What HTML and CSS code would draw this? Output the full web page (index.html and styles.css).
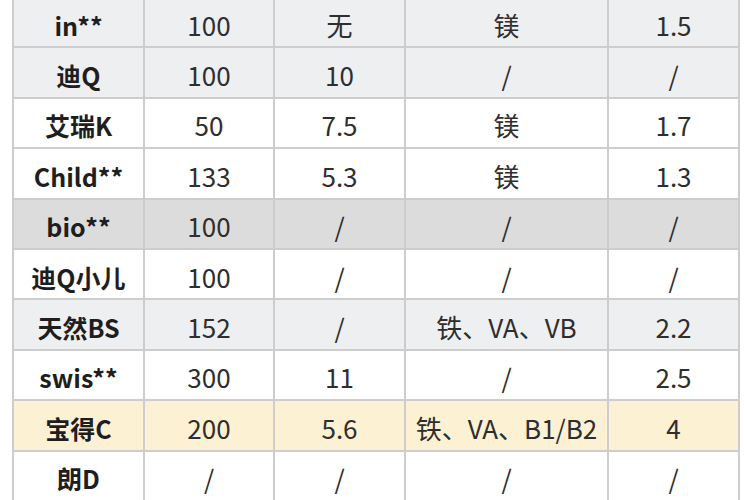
FILE: index.html
```html
<!DOCTYPE html>
<html lang="zh-CN">
<head>
<meta charset="utf-8">
<link rel="stylesheet" href="styles.css">
</head>
<body>
<div class="sheet">
<table class="grid">
  <colgroup>
    <col class="c1"><col class="c2"><col class="c3"><col class="c4"><col class="c5">
  </colgroup>
  <tbody>
    <tr class="shade"><th>in**</th><td>100</td><td>无</td><td>镁</td><td>1.5</td></tr>
    <tr class="shade"><th>迪Q</th><td>100</td><td>10</td><td>/</td><td>/</td></tr>
    <tr><th>艾瑞K</th><td>50</td><td>7.5</td><td>镁</td><td>1.7</td></tr>
    <tr><th>Child**</th><td>133</td><td>5.3</td><td>镁</td><td>1.3</td></tr>
    <tr class="dark"><th>bio**</th><td>100</td><td>/</td><td>/</td><td>/</td></tr>
    <tr><th>迪Q小儿</th><td>100</td><td>/</td><td>/</td><td>/</td></tr>
    <tr class="shade"><th>天然BS</th><td>152</td><td>/</td><td>铁、VA、VB</td><td>2.2</td></tr>
    <tr><th>swis**</th><td>300</td><td>11</td><td>/</td><td>2.5</td></tr>
    <tr class="warm"><th>宝得C</th><td>200</td><td>5.6</td><td>铁、VA、B1/B2</td><td>4</td></tr>
    <tr><th>朗D</th><td>/</td><td>/</td><td>/</td><td>/</td></tr>
  </tbody>
</table>
</div>
</body>
</html>
```
FILE: styles.css
```css
html, body {
  margin: 0;
  padding: 0;
  background: #ffffff;
}
body {
  width: 750px;
  height: 500px;
  overflow: hidden;
  font-family: "Noto Sans CJK SC", "Noto Sans", sans-serif;
}
.sheet {
  padding-left: 12px;
  margin-top: -4px;
}
.grid {
  border-collapse: collapse;
  table-layout: fixed;
  width: 726px;
}
.c1 { width: 131px; }
.c2 { width: 130px; }
.c3 { width: 131px; }
.c4 { width: 203px; }
.c5 { width: 131px; }
.grid th,
.grid td {
  height: 48px;
  padding: 5px 0 0 0;
  box-sizing: border-box;
  border: 2px solid #cdcdcd;
  text-align: center;
  vertical-align: middle;
  line-height: 30px;
  white-space: nowrap;
}
.grid th {
  font-size: 25px;
  font-weight: 700;
  color: #1e1e1e;
}
.grid td {
  font-size: 26px;
  font-weight: 400;
  color: #2e2e2e;
}
.grid tr {
  height: 50.4px;
  background: #ffffff;
}
.grid tr.shade { background: #eeeff1; }
.grid tr.dark { background: #dcdcdc; }
.grid tr.warm { background: #fdf1d4; }
```
